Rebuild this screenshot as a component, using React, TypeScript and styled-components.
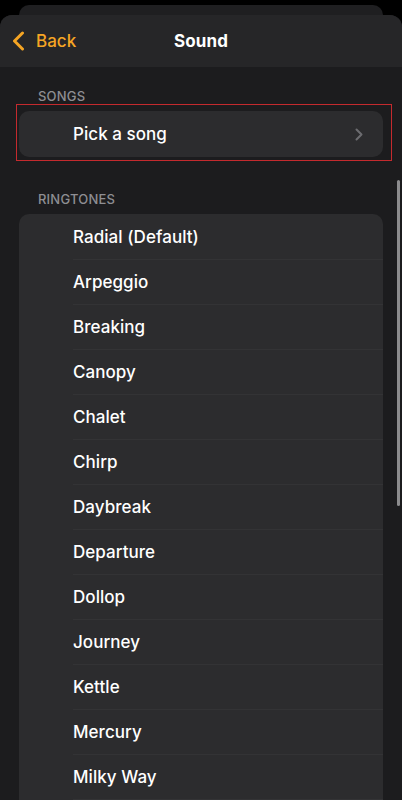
import React from 'react';
import styled, { createGlobalStyle } from 'styled-components';

const GlobalStyle = createGlobalStyle`
  html, body {
    margin: 0;
    padding: 0;
    background: #000000;
  }
  body {
    font-family: Inter, "Noto Sans", "Liberation Sans", sans-serif;
    -webkit-font-smoothing: antialiased;
  }
`;

const Screen = styled.div`
  position: relative;
  width: 402px;
  height: 800px;
  overflow: hidden;
  background: #000000;
  padding-top: 5px;
  box-sizing: border-box;
  display: flex;
  flex-direction: column;
`;

const BackSheet = styled.div`
  height: 10px;
  margin: 0 19px 0 19px;
  border-radius: 10px 10px 0 0;
  background: #1f1f21;
  flex-shrink: 0;
`;

const Sheet = styled.div`
  flex: 1;
  border-radius: 12px 12px 0 0;
  background: #1c1c1e;
  overflow: hidden;
  display: flex;
  flex-direction: column;
`;

const NavBar = styled.div`
  height: 52px;
  flex-shrink: 0;
  background: #262628;
  display: grid;
  grid-template-columns: 1fr auto 1fr;
  align-items: center;
  padding: 0 12px;
`;

const BackButton = styled.button`
  background: none;
  border: none;
  padding: 0;
  display: flex;
  align-items: center;
  gap: 11px;
  color: #f5a524;
  font-family: inherit;
  font-size: 17px;
  font-weight: 500;
  cursor: pointer;
  justify-self: start;
`;

const Title = styled.h1`
  margin: 0;
  color: #ffffff;
  font-size: 17px;
  font-weight: 700;
  letter-spacing: 0.1px;
`;

const Content = styled.div`
  padding: 21px 19px 0 19px;
  display: flex;
  flex-direction: column;
`;

const SectionHeader = styled.div<{ $top?: number }>`
  padding-left: 19px;
  margin-top: ${({ $top }) => $top ?? 0}px;
  margin-bottom: 7px;
  color: #8e8e93;
  font-size: 13px;
  font-weight: 500;
  line-height: 16px;
  letter-spacing: 0.2px;
  text-transform: uppercase;
`;

const Highlight = styled.div`
  position: relative;

  &::after {
    content: '';
    position: absolute;
    top: -7px;
    left: -3px;
    right: -9px;
    bottom: -4px;
    border: 1.5px solid #c42a2e;
    pointer-events: none;
  }
`;

const Card = styled.div`
  background: #2c2c2e;
  border-radius: 10px;
  overflow: hidden;
`;

const Row = styled.div<{ $height?: number }>`
  height: ${({ $height }) => $height ?? 45}px;
  display: flex;
  align-items: center;
  padding-left: 54px;
  padding-right: 20px;
  position: relative;

  & + &::before {
    content: '';
    position: absolute;
    top: 0;
    left: 54px;
    right: 0;
    height: 1px;
    background: #333335;
  }
`;

const RowLabel = styled.span`
  flex: 1;
  color: #ffffff;
  font-size: 17px;
  font-weight: 500;
  letter-spacing: 0.05px;
`;

const ScrollIndicator = styled.div`
  position: absolute;
  right: 2px;
  top: 180px;
  width: 3px;
  height: 326px;
  border-radius: 2px;
  background: #8c8c8e;
`;

const ringtones = [
  'Radial (Default)',
  'Arpeggio',
  'Breaking',
  'Canopy',
  'Chalet',
  'Chirp',
  'Daybreak',
  'Departure',
  'Dollop',
  'Journey',
  'Kettle',
  'Mercury',
  'Milky Way',
];

const BackChevron = () => (
  <svg width="13" height="20" viewBox="0 0 13 20" fill="none">
    <path d="M10.5 2 L2.5 10 L10.5 18" stroke="#f5a524" strokeWidth="3" strokeLinecap="round" strokeLinejoin="round" />
  </svg>
);

const Disclosure = () => (
  <svg width="8" height="13" viewBox="0 0 8 13" fill="none">
    <path d="M1.5 1.5 L6.5 6.5 L1.5 11.5" stroke="#6c6c70" strokeWidth="2" strokeLinecap="round" strokeLinejoin="round" />
  </svg>
);

export default function App() {
  return (
    <Screen>
      <GlobalStyle />
      <BackSheet />
      <Sheet>
        <NavBar>
          <BackButton>
            <BackChevron />
            Back
          </BackButton>
          <Title>Sound</Title>
          <div />
        </NavBar>
        <Content>
          <SectionHeader>Songs</SectionHeader>
          <Highlight>
            <Card>
              <Row $height={46}>
                <RowLabel>Pick a song</RowLabel>
                <Disclosure />
              </Row>
            </Card>
          </Highlight>
          <SectionHeader $top={34}>Ringtones</SectionHeader>
          <Card>
            {ringtones.map((name) => (
              <Row key={name}>
                <RowLabel>{name}</RowLabel>
              </Row>
            ))}
            <Row />
          </Card>
        </Content>
      </Sheet>
      <ScrollIndicator />
    </Screen>
  );
}
